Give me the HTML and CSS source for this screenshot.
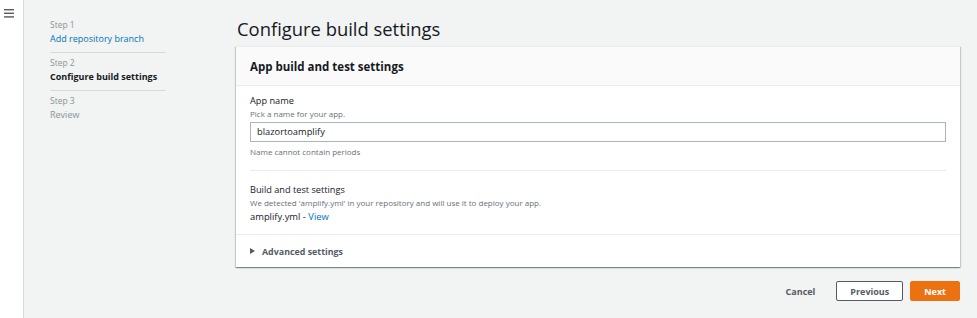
FILE: index.html
```html
<!DOCTYPE html>
<html>
<head>
<meta charset="utf-8">
<link rel="stylesheet" href="styles.css">
</head>
<body>
<div class="app">
  <aside class="rail">
    <svg class="menu" width="10" height="9" viewBox="0 0 10 9"><rect x="0" y="0" width="10" height="1.4" fill="#545b64"/><rect x="0" y="3.6" width="10" height="1.4" fill="#545b64"/><rect x="0" y="7.2" width="10" height="1.4" fill="#545b64"/></svg>
  </aside>
  <nav class="steps">
    <div class="step">
      <div class="step-num">Step 1</div>
      <a class="step-title link">Add repository branch</a>
    </div>
    <div class="step">
      <div class="step-num">Step 2</div>
      <div class="step-title current">Configure build settings</div>
    </div>
    <div class="step last">
      <div class="step-num">Step 3</div>
      <div class="step-title disabled">Review</div>
    </div>
  </nav>
  <main class="main">
    <h1 class="page-title">Configure build settings</h1>
    <section class="card">
      <header class="card-header">App build and test settings</header>
      <div class="card-body">
        <div class="field">
          <div class="label">App name</div>
          <div class="desc">Pick a name for your app.</div>
          <div class="input">blazortoamplify</div>
          <div class="hint">Name cannot contain periods</div>
        </div>
        <div class="field">
          <div class="label">Build and test settings</div>
          <div class="desc">We detected 'amplify.yml' in your repository and will use it to deploy your app.</div>
          <div class="file">amplify.yml - <a class="link">View</a></div>
        </div>
      </div>
      <div class="card-footer">
        <span class="caret"></span>
        <span>Advanced settings</span>
      </div>
    </section>
    <div class="actions">
      <button class="btn btn-link">Cancel</button>
      <button class="btn btn-normal">Previous</button>
      <button class="btn btn-primary">Next</button>
    </div>
  </main>
</div>
</body>
</html>
```

FILE: styles.css
```css
* { box-sizing: border-box; }
html, body { margin: 0; padding: 0; }
body {
  background: #f2f3f3;
  font-family: "Open Sans", "Noto Sans", Arial, sans-serif;
  color: #16191f;
  width: 977px;
  height: 318px;
  overflow: hidden;
}
.app {
  display: flex;
  height: 318px;
}
.rail {
  width: 24px;
  flex: none;
  background: #ffffff;
  border-right: 1px solid #d5dbdb;
  padding: 9px 0 0 4px;
}
.menu { display: block; }
.steps {
  width: 116px;
  margin-left: 26px;
  padding-top: 18px;
  flex: none;
}
.step {
  border-bottom: 1px solid #d5dbdb;
  padding: 0 0 5px 0;
  margin-bottom: 3px;
}
.step.last { border-bottom: none; }
.step-num {
  font-size: 8.5px;
  color: #879596;
  line-height: 13px;
}
.step-title {
  font-size: 9px;
  line-height: 16px;
  display: block;
  white-space: nowrap;
}
.link { color: #0073bb; text-decoration: none; }
.current { font-weight: 700; color: #16191f; }
.disabled { color: #879596; }
.main {
  margin-left: 70px;
  width: 724px;
  flex: none;
}
.page-title {
  margin: 0;
  font-weight: 400;
  font-size: 18.4px;
  line-height: 26px;
  padding-top: 16px;
  padding-left: 1px;
  height: 46px;
  color: #16191f;
}
.card {
  background: #ffffff;
  border-top: 1px solid #eaeded;
  box-shadow: 0 1px 1px 0 rgba(0,28,36,0.3), 1px 1px 1px 0 rgba(0,28,36,0.15), -1px 1px 1px 0 rgba(0,28,36,0.15);
}
.card-header {
  background: #fafafa;
  border-bottom: 1px solid #eaeded;
  height: 39px;
  padding: 0 14px;
  display: flex;
  align-items: center;
  font-size: 11.5px;
  font-weight: 700;
}
.card-body {
  padding: 0 14px;
}
.field {
  padding: 8px 0 12px 0;
}
.field + .field {
  border-top: 1px solid #eaeded;
  padding-top: 12px;
  padding-bottom: 9px;
}
.label {
  font-size: 9.2px;
  line-height: 14px;
}
.desc {
  font-size: 8px;
  line-height: 12px;
  color: #687078;
}
.input {
  margin-top: 2px;
  height: 20px;
  border: 1px solid #aab7b8;
  padding: 0 6px;
  font-size: 9.3px;
  line-height: 18px;
  color: #16191f;
}
.hint {
  font-size: 8px;
  line-height: 12px;
  color: #687078;
  margin-top: 4px;
}
.file {
  font-size: 9.4px;
  line-height: 16px;
}
.card-footer {
  border-top: 1px solid #eaeded;
  height: 33px;
  padding: 0 14px;
  display: flex;
  align-items: center;
  gap: 7px;
  font-size: 8.9px;
  font-weight: 700;
  color: #545b64;
}
.caret {
  width: 0;
  height: 0;
  border-top: 3.5px solid transparent;
  border-bottom: 3.5px solid transparent;
  border-left: 5px solid #545b64;
}
.actions {
  display: flex;
  justify-content: flex-end;
  align-items: center;
  margin-top: 14px;
  gap: 7px;
}
.btn {
  font-family: inherit;
  font-size: 9px;
  font-weight: 700;
  height: 20px;
  padding: 0 13px;
  border-radius: 2px;
  cursor: pointer;
}
.btn-link {
  background: transparent;
  border: 1px solid transparent;
  color: #545b64;
}
.btn-normal {
  background: #ffffff;
  border: 1px solid #545b64;
  color: #545b64;
}
.btn-primary {
  background: #ec7211;
  border: 1px solid #ec7211;
  color: #ffffff;
}
```
